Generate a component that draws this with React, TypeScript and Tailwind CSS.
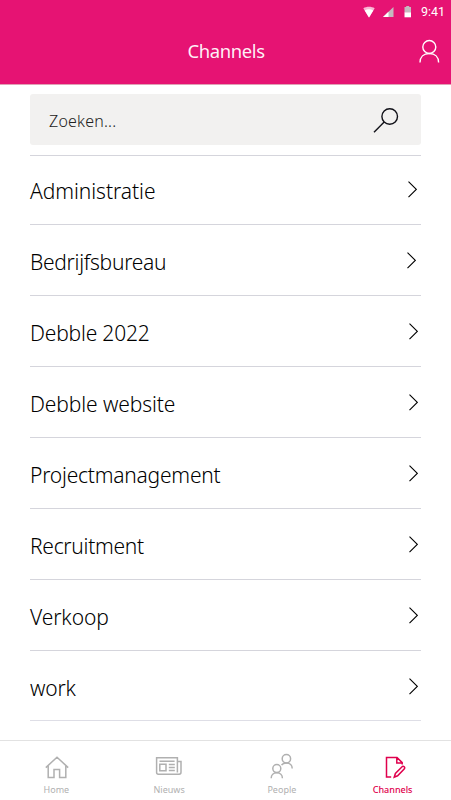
import type { ReactNode } from "react";
import clsx from "clsx";

interface Channel {
  name: string;
  row: string;
  text: string;
  arrow: string;
}

const channels: Channel[] = [
  { name: "Administratie", row: "h-[69px] pt-[20px]", text: "tracking-[-0.05px]", arrow: "mt-[5px] mr-[4px]" },
  { name: "Bedrijfsbureau", row: "h-[71px] pt-[22px]", text: "tracking-[-0.28px]", arrow: "mt-[5px] mr-[5px]" },
  { name: "Debble 2022", row: "h-[71px] pt-[22px]", text: "tracking-[-0.18px]", arrow: "mt-[5px] mr-[3px]" },
  { name: "Debble website", row: "h-[71px] pt-[22px]", text: "tracking-[-0.1px]", arrow: "mt-[5px] mr-[3px]" },
  { name: "Projectmanagement", row: "h-[71px] pt-[22px]", text: "tracking-[-0.22px]", arrow: "mt-[5px] mr-[3px]" },
  { name: "Recruitment", row: "h-[71px] pt-[22px]", text: "tracking-[-0.28px]", arrow: "mt-[5px] mr-[3px]" },
  { name: "Verkoop", row: "h-[71px] pt-[22px]", text: "tracking-[-0.1px]", arrow: "mt-[5px] mr-[3px]" },
  { name: "work", row: "h-[70px] pt-[22px]", text: "tracking-[-0.2px]", arrow: "mt-[5px] mr-[3px]" },
];

function StatusBar() {
  return (
    <div className="flex h-6 items-center justify-end pr-[6px]">
      <svg className="mr-[8px] h-[12px] w-[12px]" viewBox="0 0 12 12" aria-hidden="true">
        <path d="M0.3 2.2C3.5 0.2 8.5 0.2 11.7 2.2L6 11.5z" fill="#fff" fillOpacity="0.7" />
        <path d="M1.7 4.4C4.2 3 7.8 3 10.3 4.4L6 11.5z" fill="#fff" />
      </svg>
      <svg className="mr-[10px] h-[12px] w-[11px]" viewBox="0 0 11 12" aria-hidden="true">
        <path d="M10.5 1v10H0z" fill="#c4b9bf" />
        <path d="M5.5 5.8V11H0z" fill="#fff" />
      </svg>
      <svg className="mr-[9px] h-[12px] w-[8px]" viewBox="0 0 8 12" aria-hidden="true">
        <path d="M2.2 0h3v1H7v5.5H.5V1h1.7z" fill="#c4b9bf" />
        <path d="M.5 6.3H7v5H.5z" fill="#fff" />
      </svg>
      <span className="font-[Roboto,sans-serif] text-[12.5px] leading-6 text-white">9:41</span>
    </div>
  );
}

function Header() {
  return (
    <header className="h-[85px] border-b border-[#e0a0b4] bg-[#e61373]">
      <StatusBar />
      <div className="flex h-[54px] items-center">
        <div className="w-[41px]" />
        <h1 className="flex-1 text-center text-[18.5px] font-normal tracking-[-0.4px] text-white/95">
          Channels
        </h1>
        <button type="button" aria-label="Profiel" className="w-[40px] pl-[7px]">
          <svg className="h-[24px] w-[22px]" viewBox="0 0 22 24" fill="none" stroke="#fff" strokeWidth="1.4">
            <circle cx="11.3" cy="8" r="6.5" />
            <path d="M2 23.5C2 18 5.5 14.5 11.3 14.5S20.6 18 20.6 23.5" />
          </svg>
        </button>
      </div>
    </header>
  );
}

function SearchBox() {
  return (
    <div className="flex h-[51px] items-center justify-between rounded-[3px] bg-[#f2f1f0] pr-[22px] pl-[19px]">
      <span className="pt-[2px] text-[16px] font-[350] tracking-[0.2px] text-[#222]">Zoeken...</span>
      <svg className="h-[26px] w-[27px]" viewBox="0 0 27 26" fill="none" stroke="#111118" strokeWidth="1.4" aria-hidden="true">
        <circle cx="17.7" cy="9.5" r="7.8" />
        <path d="M12.2 15L2 25.2" />
      </svg>
    </div>
  );
}

function ChannelRow({ channel }: { channel: Channel }) {
  return (
    <li className={clsx("flex items-start justify-between border-t border-[#d5d5dc]", channel.row)}>
      <span className={clsx("text-[21px] leading-[30px] font-[350] whitespace-nowrap text-black", channel.text)}>
        {channel.name}
      </span>
      <svg className={clsx("h-[17px] w-[9px]", channel.arrow)} viewBox="0 0 9 17" fill="none" stroke="#000" strokeWidth="1.1" aria-hidden="true">
        <path d="M0.5 0.6L8.3 8.4L0.5 16.2" />
      </svg>
    </li>
  );
}

function NavItem({ label, active, children }: { label: string; active?: boolean; children: ReactNode }) {
  return (
    <a className={clsx("flex flex-col items-center", active ? "pr-[4px] text-[#e0004d]" : "text-[#b0b0b0]")}>
      <svg className="h-[26px] w-[28px]" viewBox="0 0 28 26" fill="none" stroke="currentColor" strokeWidth="1.5" aria-hidden="true">
        {children}
      </svg>
      <span className={clsx("mt-[5px] text-[9px] leading-[12px]", active ? "font-medium" : "font-normal")}>
        {label}
      </span>
    </a>
  );
}

export default function App() {
  return (
    <div className="flex h-[800px] w-[451px] flex-col overflow-hidden bg-white font-['Noto_Sans','Open_Sans',sans-serif]">
      <Header />
      <main className="flex-1 pt-[9px] pr-[30px] pl-[30px]">
        <SearchBox />
        <ul className="mt-[10px] border-b border-[#dedee6]">
          {channels.map((channel) => (
            <ChannelRow key={channel.name} channel={channel} />
          ))}
        </ul>
      </main>
      <nav className="grid h-[60px] grid-cols-4 border-t border-[#e2e2e2] pt-[12px]">
        <NavItem label="Home">
          <path d="M3.8 14.6L15 4.2L26.2 14.6M6.2 12.8V24.5H12V16.5H17.6V24.5H23.8V12.8" />
        </NavItem>
        <NavItem label="Nieuws">
          <path d="M22.4 19.5V4.8H1.6V19.5Q1.6 21.2 3.4 21.2H24.2Q26 21.2 26 19.3V8.4H22.4M4.5 8.2H19.6M13.8 11.4H19.8M13.8 14.4H19.8M13.8 17.6H19.8M4.8 11.3H11V17.8H4.8z" />
        </NavItem>
        <NavItem label="People">
          <circle cx="18.4" cy="5.8" r="4.2" />
          <circle cx="8.8" cy="15.6" r="4" />
          <path d="M3.2 25.2C3.2 22 5.5 19.8 8.8 19.8S14.4 22 14.4 25.2M13.6 12.2C14.4 10.8 16.2 10 18.4 10C22 10 24.2 12.4 24.2 15.4" />
        </NavItem>
        <NavItem label="Channels" active>
          <path d="M12.2 24H7.5V4.4H18L23.2 9.6V11.5M17.8 4.6V10H23M15.2 24.2L16.4 20.4L23.3 13.5Q24.3 12.9 25.2 13.8T25.4 15.8L18.6 22.8z" />
        </NavItem>
      </nav>
    </div>
  );
}
